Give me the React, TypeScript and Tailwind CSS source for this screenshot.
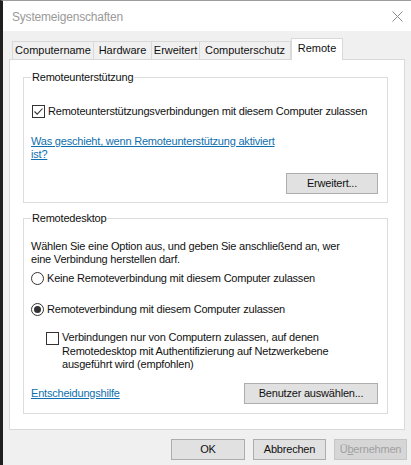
// Systemeigenschaften dialog, "Remote" tab.

const FONT = { fontFamily: '"Liberation Sans", Arial, sans-serif' }

function Checkbox({ checked }: { checked?: boolean }) {
  return (
    <span className="w-[13px] h-[13px] shrink-0 border border-[#333333] bg-white flex items-center justify-center">
      {checked && (
        <svg width="11" height="11" viewBox="0 0 11 11" fill="none">
          <path d="M1.5 5.5 L4.2 8.2 L9.5 2.5" stroke="#333333" strokeWidth="1.1" />
        </svg>
      )}
    </span>
  )
}

function Radio({ checked }: { checked?: boolean }) {
  return (
    <span className="w-[13px] h-[13px] shrink-0 rounded-full border border-[#333333] bg-white flex items-center justify-center">
      {checked && <span className="w-[7px] h-[7px] rounded-full bg-[#333333]" />}
    </span>
  )
}

function Button({ children, className = '', disabled }: { children: React.ReactNode; className?: string; disabled?: boolean }) {
  return (
    <button
      className={
        'h-[21px] border text-[11px] leading-none flex items-center justify-center ' +
        (disabled ? 'bg-[#d6d6d6] border-[#c6c6c6] text-[#a0a0a0] ' : 'bg-[#e1e1e1] border-[#adadad] text-[#111111] ') +
        className
      }
    >
      {children}
    </button>
  )
}

const TABS = [
  { label: 'Computername', w: 'w-[82px]' },
  { label: 'Hardware', w: 'w-[58px]' },
  { label: 'Erweitert', w: 'w-[48px]' },
  { label: 'Computerschutz', w: 'w-[91px]' },
]

export default function App() {
  return (
    <div style={FONT} className="w-[411px] h-[465px] bg-[#f0f0f0] border-l-[3px] border-t border-l-[#1f1f1f] border-t-[#9c9c9c] overflow-hidden text-[11px] tracking-[-0.2px] text-[#111111] flex flex-col">
      {/* title bar */}
      <div className="h-[30px] bg-white flex items-center justify-between pl-[9px] pr-[8px] shrink-0">
        <span className="text-[12px] text-[#9a9a9a] pt-[1px]">Systemeigenschaften</span>
        <svg width="11" height="11" viewBox="0 0 11 11" className="mt-[1px]">
          <path d="M0.5 0.5 L10.5 10.5 M10.5 0.5 L0.5 10.5" stroke="#8c8c8c" strokeWidth="1" />
        </svg>
      </div>

      <div className="pl-[6px] pr-[6px] flex flex-col">
        {/* tabs */}
        <div className="flex items-end pl-[3px] mt-[7px] h-[21px] tracking-normal">
          {TABS.map((t, i) => (
            <div
              key={t.label}
              className={`${t.w} h-[18px] border border-b-0 border-[#d9d9d9] ${i > 0 ? 'border-l-0' : ''} bg-[#f0f0f0] flex items-center justify-center leading-none`}
            >
              {t.label}
            </div>
          ))}
          <div className="w-[52px] h-[22px] -mb-px relative z-10 border border-b-0 border-[#d9d9d9] bg-white flex items-start justify-center pt-[4px] leading-none">
            Remote
          </div>
        </div>

        {/* panel */}
        <div className="h-[371px] bg-white border border-[#d9d9d9] pl-[13px] pr-[16px] pt-[10px]">
          <fieldset className="border border-[#dcdcdc] px-0 pb-[8px]">
            <legend className="ml-[7px] px-[1px] leading-[15px]">Remoteunterstützung</legend>
            <div className="flex items-center mt-[19px] pl-[8px] h-[15px]">
              <Checkbox checked />
              <span className="ml-[3px]">Remoteunterstützungsverbindungen mit diesem Computer zulassen</span>
            </div>
            <div className="mt-[16px] pl-[7px] leading-[13px]">
              <a className="text-[#0f6fae] underline underline-offset-1">
                Was geschieht, wenn Remoteunterstützung aktiviert
                <br />
                ist?
              </a>
            </div>
            <div className="flex justify-end pr-[9px] mt-[12px]">
              <Button className="w-[92px]">Erweitert...</Button>
            </div>
          </fieldset>

          <fieldset className="border border-[#dcdcdc] px-0 pb-[9px] mt-[8px]">
            <legend className="ml-[7px] px-[1px] leading-[15px]">Remotedesktop</legend>
            <p className="mt-[14px] pl-[7px] leading-[13px]">
              Wählen Sie eine Option aus, und geben Sie anschließend an, wer
              <br />
              eine Verbindung herstellen darf.
            </p>
            <div className="flex items-center mt-[5px] pl-[7px] h-[15px]">
              <Radio />
              <span className="ml-[3px]">Keine Remoteverbindung mit diesem Computer zulassen</span>
            </div>
            <div className="flex items-center mt-[16px] pl-[7px] h-[15px]">
              <Radio checked />
              <span className="ml-[3px]">Remoteverbindung mit diesem Computer zulassen</span>
            </div>
            <div className="flex items-start mt-[14px] pl-[22px]">
              <span className="mt-[1px]">
                <Checkbox />
              </span>
              <span className="ml-[3px] leading-[13.5px]">
                Verbindungen nur von Computern zulassen, auf denen
                <br />
                Remotedesktop mit Authentifizierung auf Netzwerkebene
                <br />
                ausgeführt wird (empfohlen)
              </span>
            </div>
            <div className="flex items-center justify-between mt-[11px] pl-[7px] pr-[9px]">
              <a className="text-[#0f6fae] underline underline-offset-1">Entscheidungshilfe</a>
              <Button className="w-[134px]">Benutzer auswählen...</Button>
            </div>
          </fieldset>
        </div>

        {/* dialog buttons */}
        <div className="flex justify-end gap-[8px] mt-[9px] -mr-[2px]">
          <Button className="w-[74px]">OK</Button>
          <Button className="w-[73px]">Abbrechen</Button>
          <Button disabled className="w-[73px]">
            Ü<span className="underline">b</span>ernehmen
          </Button>
        </div>
      </div>
    </div>
  )
}
